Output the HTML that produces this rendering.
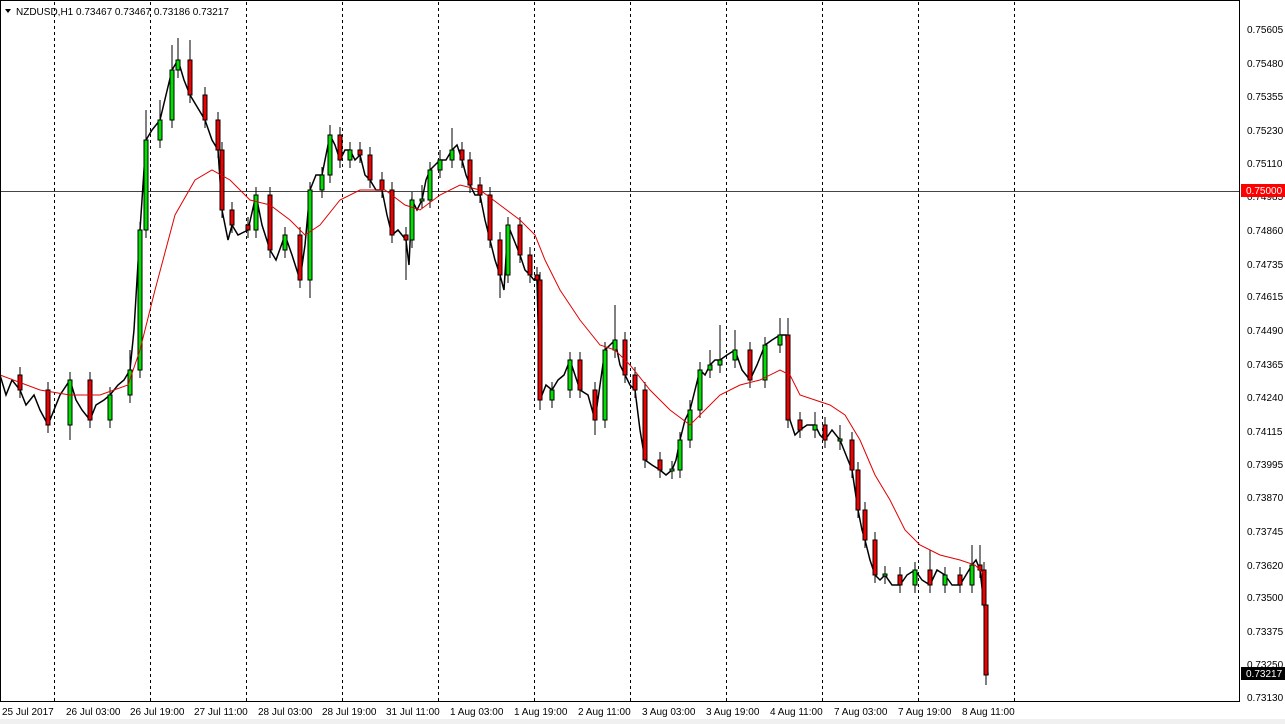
<!DOCTYPE html>
<html><head><meta charset="utf-8">
<style>
html,body{margin:0;padding:0;background:#fff;width:1285px;height:724px;overflow:hidden}
svg{display:block;font-family:"Liberation Sans","DejaVu Sans",sans-serif}
</style></head><body>
<svg width="1285" height="724" xmlns="http://www.w3.org/2000/svg">
<rect x="0" y="0" width="1285" height="724" fill="#fff"/>
<rect x="0" y="719" width="1285" height="5" fill="#f0f0f0"/>
<g stroke="#000" stroke-dasharray="3,3">
<line x1="54.5" y1="2" x2="54.5" y2="701"/><line x1="150.5" y1="2" x2="150.5" y2="701"/><line x1="246.5" y1="2" x2="246.5" y2="701"/><line x1="342.5" y1="2" x2="342.5" y2="701"/><line x1="438.5" y1="2" x2="438.5" y2="701"/><line x1="534.5" y1="2" x2="534.5" y2="701"/><line x1="630.5" y1="2" x2="630.5" y2="701"/><line x1="726.5" y1="2" x2="726.5" y2="701"/><line x1="822.5" y1="2" x2="822.5" y2="701"/><line x1="918.5" y1="2" x2="918.5" y2="701"/><line x1="1014.5" y1="2" x2="1014.5" y2="701"/>
</g>
<line x1="1" y1="191.5" x2="1240" y2="191.5" stroke="#444"/>
<polyline fill="none" stroke="#000" stroke-width="1.5" points="0,375 6,395 12,380 20,390 26,405 34,395 40,410 48,425 54,410 60,395 70,380 76,400 82,410 90,420 96,405 104,400 110,395 118,385 124,380 130,370 134,330 140,230 146,140 152,130 160,120 166,95 172,70 178,60 184,80 190,95 196,105 205,120 212,140 218,150 222,210 228,240 232,225 238,235 248,230 256,195 262,225 270,250 276,260 285,235 292,255 300,280 305,245 310,190 316,175 322,175 330,135 335,145 340,160 345,150 350,150 355,160 360,155 365,175 370,180 376,190 382,190 387,215 392,235 398,230 406,240 409,265 412,200 417,210 422,200 426,180 430,170 435,165 440,160 446,160 452,150 457,145 462,160 466,175 470,185 475,195 480,195 485,220 490,240 495,260 500,275 504,290 508,225 514,240 520,255 525,270 530,275 534,280 537,280 540,400 546,385 552,390 558,380 564,375 570,360 575,375 580,390 588,395 595,420 600,385 605,350 610,345 615,340 620,365 625,375 630,385 635,390 640,430 645,460 652,465 660,470 666,475 672,470 676,460 680,440 685,420 690,410 695,390 700,370 705,375 710,365 715,360 720,360 727,355 735,350 742,370 750,380 757,365 765,345 772,340 780,335 786,335 788,395 790,420 795,435 800,430 807,425 815,425 820,435 825,440 832,430 840,440 846,455 852,470 855,490 858,510 862,530 865,540 870,560 875,575 880,580 885,575 892,585 900,585 907,575 915,570 922,580 930,585 937,570 945,575 952,585 960,585 966,575 972,565 976,560 980,570 984,605 988,675"/>
<path fill="none" stroke="#000" stroke-width="1" d="M20 367V398 M48 382V433 M90 372V428 M190 40V103 M205 87V128 M218 112V158 M222 142V218 M232 202V233 M248 217V238 M270 187V258 M300 227V288 M340 127V168 M360 142V163 M370 147V188 M382 172V198 M392 182V243 M406 227V280 M462 142V168 M470 152V193 M480 177V203 M490 187V248 M500 232V298 M520 217V263 M530 247V283 M537 267V288 M540 272V410 M580 352V398 M595 382V435 M625 332V383 M635 367V398 M645 382V468 M660 452V478 M750 342V388 M788 318V428 M800 412V438 M825 417V448 M852 432V478 M858 462V518 M865 502V548 M875 532V583 M900 567V593 M930 550V593 M960 567V593 M980 545V578 M984 562V613 M986 597V685 M70 372V440 M110 387V428 M130 350V403 M140 222V378 M146 110V238 M160 100V148 M172 45V128 M178 38V78 M256 187V238 M285 227V258 M310 182V298 M322 167V198 M330 125V183 M350 142V168 M412 192V248 M422 185V208 M430 162V208 M440 150V178 M452 128V168 M508 217V283 M552 382V408 M570 352V398 M605 342V428 M615 305V358 M672 461V479 M680 432V478 M690 400V448 M700 362V418 M710 350V378 M720 325V373 M735 330V368 M765 337V388 M780 318V353 M815 412V438 M840 425V450 M885 566V584 M915 562V593 M945 567V593 M972 545V593"/>
<g stroke="#000" stroke-width="1">
<g fill="#f00000">
<rect x="18" y="375" width="4" height="15"/><rect x="46" y="390" width="4" height="35"/><rect x="88" y="380" width="4" height="40"/><rect x="188" y="60" width="4" height="35"/><rect x="203" y="95" width="4" height="25"/><rect x="216" y="120" width="4" height="30"/><rect x="220" y="150" width="4" height="60"/><rect x="230" y="210" width="4" height="15"/><rect x="246" y="225" width="4" height="5"/><rect x="268" y="195" width="4" height="55"/><rect x="298" y="235" width="4" height="45"/><rect x="338" y="135" width="4" height="25"/><rect x="358" y="150" width="4" height="5"/><rect x="368" y="155" width="4" height="25"/><rect x="380" y="180" width="4" height="10"/><rect x="390" y="190" width="4" height="45"/><rect x="404" y="235" width="4" height="5"/><rect x="460" y="150" width="4" height="10"/><rect x="468" y="160" width="4" height="25"/><rect x="478" y="185" width="4" height="10"/><rect x="488" y="195" width="4" height="45"/><rect x="498" y="240" width="4" height="35"/><rect x="518" y="225" width="4" height="30"/><rect x="528" y="255" width="4" height="20"/><rect x="535" y="275" width="4" height="5"/><rect x="538" y="280" width="4" height="120"/><rect x="578" y="360" width="4" height="30"/><rect x="593" y="390" width="4" height="30"/><rect x="623" y="340" width="4" height="35"/><rect x="633" y="375" width="4" height="15"/><rect x="643" y="390" width="4" height="70"/><rect x="658" y="460" width="4" height="10"/><rect x="748" y="350" width="4" height="30"/><rect x="786" y="335" width="4" height="85"/><rect x="798" y="420" width="4" height="10"/><rect x="823" y="425" width="4" height="15"/><rect x="850" y="440" width="4" height="30"/><rect x="856" y="470" width="4" height="40"/><rect x="863" y="510" width="4" height="30"/><rect x="873" y="540" width="4" height="35"/><rect x="898" y="575" width="4" height="10"/><rect x="928" y="570" width="4" height="15"/><rect x="958" y="575" width="4" height="10"/><rect x="978" y="565" width="4" height="5"/><rect x="982" y="570" width="4" height="35"/><rect x="984" y="605" width="4" height="70"/>
</g>
<g fill="#00e000">
<rect x="68" y="380" width="4" height="45"/><rect x="108" y="395" width="4" height="25"/><rect x="128" y="370" width="4" height="25"/><rect x="138" y="230" width="4" height="140"/><rect x="144" y="140" width="4" height="90"/><rect x="158" y="120" width="4" height="20"/><rect x="170" y="70" width="4" height="50"/><rect x="176" y="60" width="4" height="10"/><rect x="254" y="195" width="4" height="35"/><rect x="283" y="235" width="4" height="15"/><rect x="308" y="190" width="4" height="90"/><rect x="320" y="175" width="4" height="15"/><rect x="328" y="135" width="4" height="40"/><rect x="348" y="150" width="4" height="10"/><rect x="410" y="200" width="4" height="40"/><rect x="420" y="199" width="4" height="2"/><rect x="428" y="170" width="4" height="30"/><rect x="438" y="160" width="4" height="10"/><rect x="450" y="150" width="4" height="10"/><rect x="506" y="225" width="4" height="50"/><rect x="550" y="390" width="4" height="10"/><rect x="568" y="360" width="4" height="30"/><rect x="603" y="350" width="4" height="70"/><rect x="613" y="340" width="4" height="10"/><rect x="670" y="469" width="4" height="2"/><rect x="678" y="440" width="4" height="30"/><rect x="688" y="410" width="4" height="30"/><rect x="698" y="370" width="4" height="40"/><rect x="708" y="365" width="4" height="5"/><rect x="718" y="360" width="4" height="5"/><rect x="733" y="350" width="4" height="10"/><rect x="763" y="345" width="4" height="35"/><rect x="778" y="335" width="4" height="10"/><rect x="813" y="425" width="4" height="5"/><rect x="838" y="439" width="4" height="2"/><rect x="883" y="574" width="4" height="2"/><rect x="913" y="570" width="4" height="15"/><rect x="943" y="575" width="4" height="10"/><rect x="970" y="565" width="4" height="20"/>
</g>
</g>
<polyline fill="none" stroke="#e00000" stroke-width="1" points="0,375 40,390 70,395 100,395 128,385 140,350 155,290 175,215 195,180 212,170 230,180 250,200 270,205 290,220 305,235 320,225 340,200 360,190 385,190 405,205 420,210 440,195 460,185 480,190 500,205 520,220 535,235 545,260 560,290 580,320 600,345 615,350 630,365 650,390 670,410 690,425 705,410 720,395 740,385 760,380 780,370 790,375 800,395 815,400 830,405 845,415 860,440 875,475 890,500 905,530 920,545 940,555 960,560 975,565 985,575"/>
<rect x="0.5" y="0.5" width="1239" height="701" fill="none" stroke="#000"/>
<g font-size="10" fill="#000">
<text x="1247" y="33">0.75605</text><text x="1247" y="67">0.75480</text><text x="1247" y="100">0.75355</text><text x="1247" y="134">0.75230</text><text x="1247" y="167">0.75110</text><text x="1247" y="200">0.74985</text><text x="1247" y="234">0.74860</text><text x="1247" y="268">0.74735</text><text x="1247" y="300">0.74615</text><text x="1247" y="334">0.74490</text><text x="1247" y="368">0.74365</text><text x="1247" y="401">0.74240</text><text x="1247" y="435">0.74115</text><text x="1247" y="468">0.73995</text><text x="1247" y="501">0.73870</text><text x="1247" y="535">0.73745</text><text x="1247" y="569">0.73620</text><text x="1247" y="601">0.73500</text><text x="1247" y="635">0.73375</text><text x="1247" y="668">0.73250</text><text x="1247" y="701">0.73130</text>
</g>
<rect x="1241" y="184" width="44" height="13" fill="#f00"/><text x="1246" y="194" font-size="10" fill="#fff">0.75000</text>
<rect x="1241" y="667" width="44" height="13" fill="#000"/><text x="1246" y="677" font-size="10" fill="#fff">0.73217</text>
<g font-size="10" fill="#000">
<text x="2" y="715">25 Jul 2017</text><text x="66" y="715">26 Jul 03:00</text><text x="130" y="715">26 Jul 19:00</text><text x="194" y="715">27 Jul 11:00</text><text x="258" y="715">28 Jul 03:00</text><text x="322" y="715">28 Jul 19:00</text><text x="386" y="715">31 Jul 11:00</text><text x="450" y="715">1 Aug 03:00</text><text x="514" y="715">1 Aug 19:00</text><text x="578" y="715">2 Aug 11:00</text><text x="642" y="715">3 Aug 03:00</text><text x="706" y="715">3 Aug 19:00</text><text x="770" y="715">4 Aug 11:00</text><text x="834" y="715">7 Aug 03:00</text><text x="898" y="715">7 Aug 19:00</text><text x="962" y="715">8 Aug 11:00</text>
</g>
<path d="M5 9 L11 9 L8 13 Z" fill="#000"/>
<text x="16" y="15" font-size="10" fill="#000">NZDUSD,H1  0.73467 0.73467 0.73186 0.73217</text>
</svg>
</body></html>
